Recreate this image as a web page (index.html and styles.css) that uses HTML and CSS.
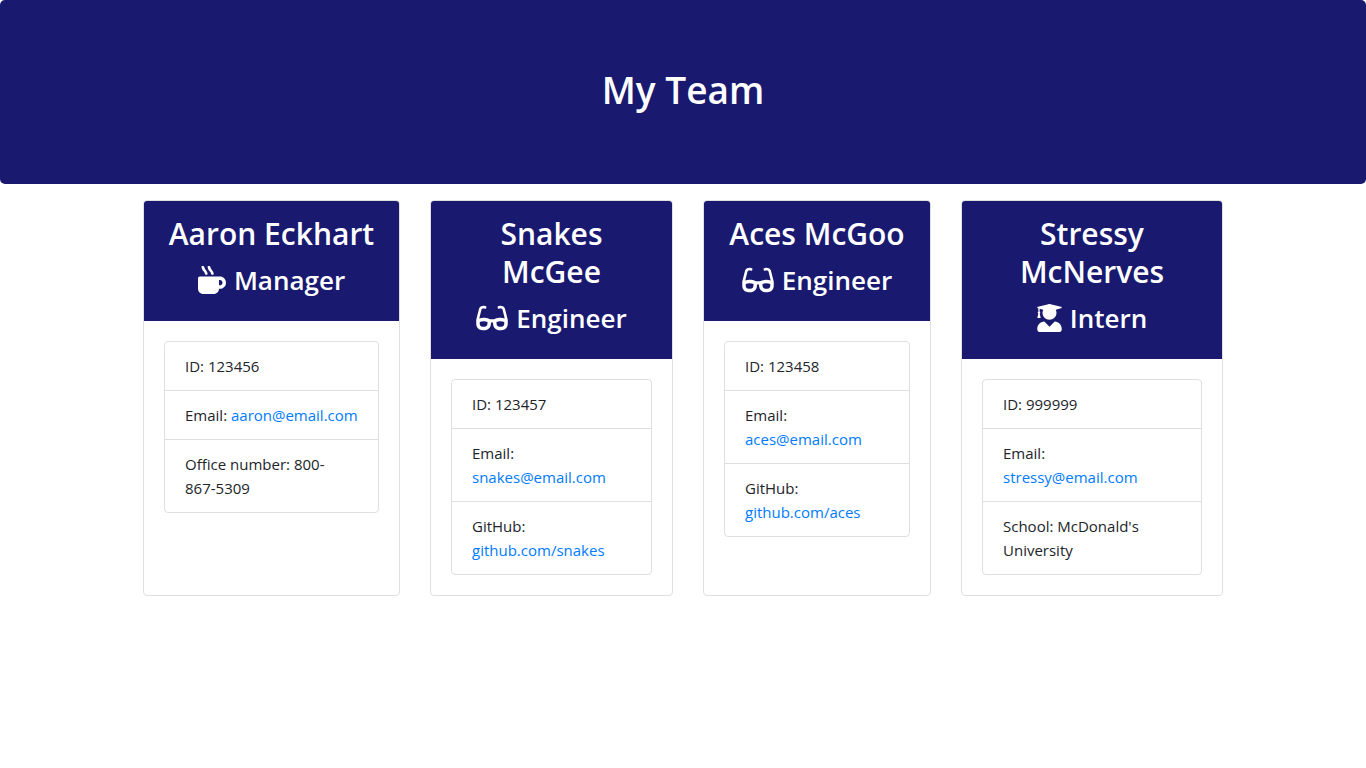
FILE: index.html
```html
<!DOCTYPE html>
<html lang="en">
<head>
<meta charset="utf-8">
<meta name="viewport" content="width=device-width, initial-scale=1">
<title>My Team</title>
<link rel="stylesheet" href="styles.css">
</head>
<body>
<svg class="sprite" aria-hidden="true">
  <symbol id="mug" viewBox="0 0 512 512"><path d="M127.1 146.5c1.3 7.7 8 13.5 16 13.5h16.5c9.8 0 17.6-8.5 16.3-18-3.8-28.2-16.4-54.2-36.6-74.7-14.4-14.7-23.6-33.3-26.4-53.5C111.8 5.9 105 0 96.8 0H80.4C70.6 0 63 8.5 64.1 18c3.9 31.9 18 61.3 40.6 84.4 12 12.2 19.7 27.5 22.4 44.1zm112 0c1.3 7.7 8 13.5 16 13.5h16.5c9.8 0 17.6-8.5 16.3-18-3.8-28.2-16.4-54.2-36.6-74.7-14.4-14.7-23.6-33.3-26.4-53.5C223.8 5.9 217 0 208.8 0h-16.4c-9.8 0-17.5 8.5-16.3 18 3.9 31.9 18 61.3 40.6 84.4 12 12.2 19.7 27.5 22.4 44.1zM400 192H32c-17.7 0-32 14.3-32 32v192c0 53 43 96 96 96h192c53 0 96-43 96-96h16c61.8 0 112-50.2 112-112s-50.2-112-112-112zm0 160h-16v-96h16c26.5 0 48 21.5 48 48s-21.5 48-48 48z"/></symbol>
  <symbol id="glasses" viewBox="0 0 576 512"><path d="M574.1 280.37L528.75 98.66c-5.91-23.7-21.59-44.05-43-55.81-21.44-11.73-46.97-14.11-70.19-6.33l-15.25 5.08c-8.39 2.79-12.92 11.86-10.12 20.24l5.06 15.18c2.79 8.38 11.85 12.91 20.23 10.12l13.18-4.39c10.87-3.62 23-3.57 33.16 1.73 10.29 5.37 17.57 14.56 20.37 25.82l38.46 153.82c-22.19-6.81-49.79-12.46-81.2-12.46-34.77 0-73.98 7.02-114.85 26.74h-73.18c-40.87-19.74-80.08-26.75-114.86-26.75-31.42 0-59.02 5.65-81.21 12.46l38.46-153.83c2.79-11.25 10.09-20.45 20.38-25.81 10.16-5.3 22.28-5.35 33.15-1.73l13.17 4.39c8.38 2.79 17.44-1.74 20.23-10.12l5.06-15.18c2.8-8.38-1.73-17.45-10.12-20.24l-15.25-5.08c-23.22-7.78-48.75-5.41-70.19 6.33-21.41 11.77-37.09 32.11-43 55.8L1.9 280.37A64.218 64.218 0 0 0 0 295.86v70.25C0 429.01 51.58 480 115.2 480h37.12c60.28 0 110.37-45.94 114.88-105.37l2.93-38.63h35.75l2.93 38.63C313.31 434.06 363.4 480 423.68 480h37.12c63.62 0 115.2-50.99 115.2-113.88v-70.25c0-5.23-.64-10.43-1.9-15.5zm-370.72 89.42c-1.97 25.91-24.4 46.21-51.06 46.21H115.2C86.97 416 64 393.62 64 366.11v-37.54c18.12-6.49 43.42-12.92 72.58-12.92 23.86 0 47.26 4.33 69.93 12.92l-3.13 41.22zM512 366.12c0 27.51-22.97 49.88-51.2 49.88h-37.12c-26.67 0-49.1-20.3-51.06-46.21l-3.13-41.22c22.67-8.59 46.08-12.92 69.95-12.92 29.12 0 54.43 6.44 72.55 12.93v37.54z"/></symbol>
  <symbol id="graduate" viewBox="0 0 448 512"><path d="M319.4 320.6L224 416l-95.4-95.4C57.1 323.7 0 382.2 0 454.4v9.6c0 26.5 21.5 48 48 48h352c26.5 0 48-21.5 48-48v-9.6c0-72.2-57.1-130.7-128.6-133.8zM13.6 79.8l6.4 1.5v58.4c-7 4.2-12 11.5-12 20.3 0 8.4 4.6 15.4 11.1 19.7L3.5 242c-1.7 6.9 2.1 14 7.6 14h41.8c5.5 0 9.3-7.1 7.6-14l-15.6-62.3C51.4 175.4 56 168.4 56 160c0-8.8-5-16.1-12-20.3V87.1l66 15.9c-8.6 17.2-14 36.4-14 57 0 70.7 57.3 128 128 128s128-57.3 128-128c0-20.6-5.3-39.8-14-57l96.3-23.2c18.2-4.4 18.2-27.1 0-31.5l-190.4-46c-13-3.1-26.7-3.1-39.7 0L13.6 48.2c-18.1 4.4-18.1 27.2 0 31.6z"/></symbol>
</svg>
<header class="banner">
  <h1 class="banner-title">My Team</h1>
</header>
<main class="team">
  <article class="card">
    <div class="card-header">
      <h2 class="name">Aaron Eckhart</h2>
      <h3 class="role"><svg class="icon icon-mug" aria-hidden="true"><use href="#mug"/></svg>Manager</h3>
    </div>
    <ul class="details">
      <li class="detail">ID: 123456</li>
      <li class="detail">Email: <a class="link" href="mailto:aaron@email.com">aaron@email.com</a></li>
      <li class="detail">Office number: 800-<wbr><span class="local-number">867-5309</span></li>
    </ul>
  </article>
  <article class="card">
    <div class="card-header">
      <h2 class="name">Snakes McGee</h2>
      <h3 class="role"><svg class="icon icon-glasses" aria-hidden="true"><use href="#glasses"/></svg>Engineer</h3>
    </div>
    <ul class="details">
      <li class="detail">ID: 123457</li>
      <li class="detail">Email: <a class="link" href="mailto:snakes@email.com">snakes@email.com</a></li>
      <li class="detail">GitHub: <a class="link" href="https://github.com/snakes">github.com/snakes</a></li>
    </ul>
  </article>
  <article class="card">
    <div class="card-header">
      <h2 class="name">Aces McGoo</h2>
      <h3 class="role"><svg class="icon icon-glasses" aria-hidden="true"><use href="#glasses"/></svg>Engineer</h3>
    </div>
    <ul class="details">
      <li class="detail">ID: 123458</li>
      <li class="detail">Email: <a class="link" href="mailto:aces@email.com">aces@email.com</a></li>
      <li class="detail">GitHub: <a class="link" href="https://github.com/aces">github.com/aces</a></li>
    </ul>
  </article>
  <article class="card">
    <div class="card-header">
      <h2 class="name">Stressy McNerves</h2>
      <h3 class="role"><svg class="icon icon-graduate" aria-hidden="true"><use href="#graduate"/></svg>Intern</h3>
    </div>
    <ul class="details">
      <li class="detail">ID: 999999</li>
      <li class="detail">Email: <a class="link" href="mailto:stressy@email.com">stressy@email.com</a></li>
      <li class="detail">School: McDonald's University</li>
    </ul>
  </article>
</main>
</body>
</html>
```
FILE: styles.css
```css
* {
  box-sizing: border-box;
}

body {
  margin: 0;
  background: #fff;
  color: #212529;
  font-family: "Segoe UI", "Open Sans", "Noto Sans", sans-serif;
  font-size: 15px;
  line-height: 24px;
}

.sprite {
  display: none;
}

.banner {
  padding: 66px 32px 70px;
  border-radius: 5px;
  background: #191970;
  color: #fff;
  text-align: center;
}

.banner-title {
  margin: 0;
  font-size: 37px;
  font-weight: 600;
  line-height: 48px;
}

.team {
  display: grid;
  grid-template-columns: 257fr 243fr 228fr 262fr;
  gap: 30px;
  max-width: 1140px;
  margin: 0 auto;
  padding: 16px 30px;
}

.card {
  min-width: 0;
  border: 1px solid #dfdfdf;
  border-radius: 4px;
  background: #fff;
}

.card-header {
  padding: 14px 20px 20px;
  border-radius: 3px 3px 0 0;
  background: #191970;
  color: #fff;
  text-align: center;
}

.name {
  margin: 0 0 6px;
  font-size: 30px;
  font-weight: 600;
  line-height: 38px;
}

.role {
  display: flex;
  align-items: center;
  justify-content: center;
  gap: 8px;
  margin: 0;
  font-size: 26px;
  font-weight: 600;
  line-height: 42px;
}

.icon {
  height: 28px;
  fill: currentColor;
}

.icon-mug {
  width: 28px;
}

.icon-glasses {
  width: 32px;
}

.icon-graduate {
  width: 25px;
}

.details {
  margin: 20px;
  padding: 0;
  border: 1px solid #dfdfdf;
  border-radius: 4px;
  list-style: none;
}

.detail {
  padding: 12px 20px;
}

.detail + .detail {
  border-top: 1px solid #dfdfdf;
}

.local-number {
  white-space: nowrap;
}

.link {
  color: #007bff;
  text-decoration: none;
}
```
